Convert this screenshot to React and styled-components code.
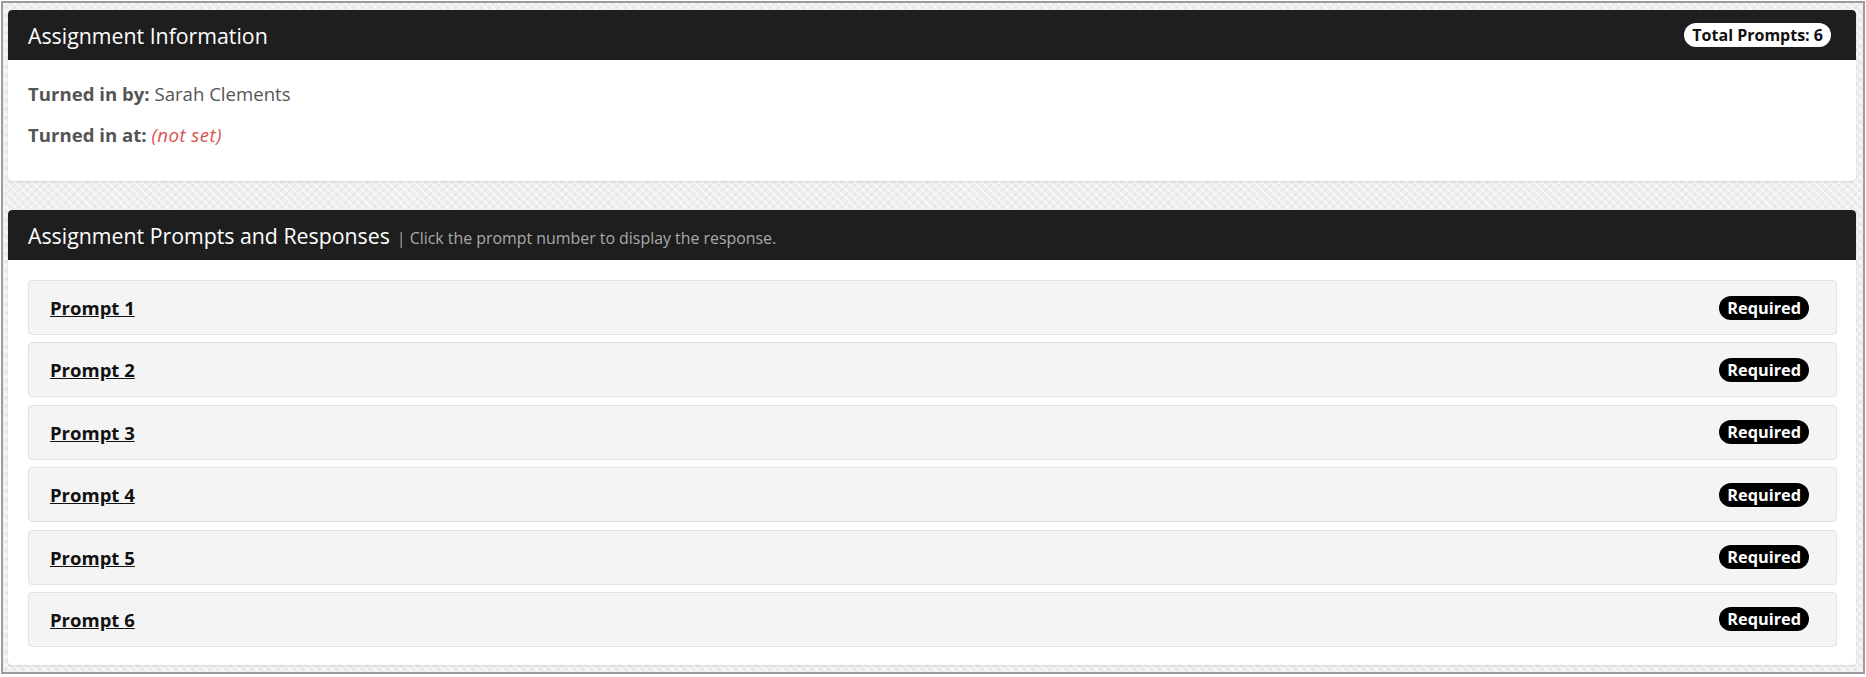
import styled, { createGlobalStyle } from "styled-components";

const GlobalStyle = createGlobalStyle`
  html, body {
    margin: 0;
    padding: 0;
    background: #ffffff;
    font-family: "Open Sans", "Liberation Sans", sans-serif;
  }
  * {
    box-sizing: border-box;
  }
`;

const prompts = [1, 2, 3, 4, 5, 6];

export default function App() {
  return (
    <>
      <GlobalStyle />
      <Frame>
        <Card>
          <CardHeader>
            <Title>Assignment Information</Title>
            <CountBadge>Total Prompts: {prompts.length}</CountBadge>
          </CardHeader>
          <InfoBody>
            <InfoLine>
              <Label>Turned in by:</Label> Sarah Clements
            </InfoLine>
            <InfoLine>
              <Label>Turned in at:</Label> <NotSet>(not set)</NotSet>
            </InfoLine>
          </InfoBody>
        </Card>

        <Card>
          <CardHeader>
            <Title>
              Assignment Prompts and Responses
              <Hint>| Click the prompt number to display the response.</Hint>
            </Title>
          </CardHeader>
          <PromptList>
            {prompts.map((n) => (
              <PromptRow key={n}>
                <PromptLink href="#">Prompt {n}</PromptLink>
                <RequiredBadge>Required</RequiredBadge>
              </PromptRow>
            ))}
          </PromptList>
        </Card>
      </Frame>
    </>
  );
}

const Frame = styled.div`
  margin: 1px 1px 3px 1px;
  height: 673px;
  border: 2px solid #9c9c9c;
  padding: 7px 7px 7px 5px;
  display: flex;
  flex-direction: column;
  gap: 29px;
  background-color: #efefef;
  background-image:
    repeating-linear-gradient(45deg, rgba(255,255,255,0.55) 0 2px, transparent 2px 6px),
    repeating-linear-gradient(-45deg, rgba(225,225,225,0.6) 0 2px, transparent 2px 6px);
`;

const Card = styled.div`
  background: #ffffff;
  border-radius: 4px;
  box-shadow: 0 1px 2px rgba(0, 0, 0, 0.12);
  overflow: hidden;
`;

const CardHeader = styled.div`
  height: 50px;
  background: #1e1e1e;
  border-radius: 4px 4px 0 0;
  display: flex;
  align-items: center;
  justify-content: space-between;
  padding: 0 25px 0 20px;
`;

const Title = styled.h2`
  margin: 0;
  font-size: 21.3px;
  font-weight: 400;
  color: #ffffff;
  display: flex;
  align-items: baseline;
`;

const Hint = styled.span`
  margin-left: 7px;
  font-size: 15.9px;
  color: #a9a9a9;
`;

const CountBadge = styled.span`
  height: 24px;
  padding: 0 8px;
  border-radius: 12px;
  background: #ffffff;
  color: #111111;
  font-size: 16px;
  font-weight: 700;
  display: flex;
  align-items: center;
`;

const InfoBody = styled.div`
  padding: 22px 20px 16px;
  height: 121px;
`;

const InfoLine = styled.p`
  margin: 0 0 17px;
  font-size: 18.6px;
  line-height: 24px;
  color: #555555;
`;

const Label = styled.strong`
  font-weight: 700;
`;

const NotSet = styled.em`
  color: #d9534f;
  letter-spacing: 0.5px;
`;

const PromptList = styled.div`
  padding: 20px 19px 18px 20px;
  display: flex;
  flex-direction: column;
  gap: 7.4px;
`;

const PromptRow = styled.div`
  height: 55px;
  background: #f4f4f4;
  border: 1px solid #e2e2e2;
  border-radius: 4px;
  display: flex;
  align-items: center;
  justify-content: space-between;
  padding: 0 27px 0 21px;
`;

const PromptLink = styled.a`
  font-size: 18.5px;
  font-weight: 700;
  color: #111111;
  text-decoration: underline;
`;

const RequiredBadge = styled.span`
  height: 24px;
  padding: 0 8px;
  border-radius: 12px;
  background: #000000;
  color: #ffffff;
  font-size: 16.3px;
  font-weight: 700;
  display: flex;
  align-items: center;
`;
